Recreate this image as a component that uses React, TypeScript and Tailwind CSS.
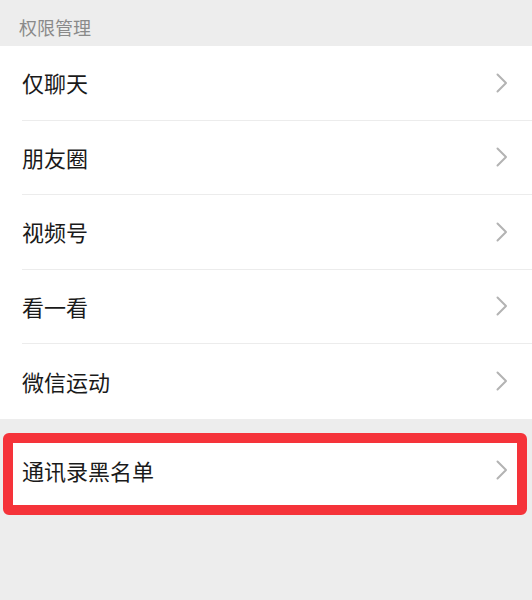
const font = { fontFamily: '"Noto Sans CJK SC", "Noto Sans", sans-serif' };

const Chevron = () => (
  <svg width="14" height="20" viewBox="0 0 14 20" fill="none" className="shrink-0">
    <path d="M2.5 1.5 L11 10 L2.5 18.5" stroke="#b3b3b3" strokeWidth="2" strokeLinecap="round" strokeLinejoin="round" />
  </svg>
);

const items = ['仅聊天', '朋友圈', '视频号', '看一看', '微信运动'];

export default function App() {
  return (
    <div className="w-[532px] h-[600px] bg-[#ededed] overflow-hidden" style={font}>
      <div className="h-[46px] flex items-start pt-[14px] pl-[19px] text-[18px] leading-[26px] text-[#8a8a8a]">权限管理</div>
      <div className="bg-white">
        {items.map((t, i) => (
          <div key={t} className="pl-[22px]">
            <div
              className={
                'h-[74.5px] flex items-center justify-between pr-[23px] ' +
                (i < items.length - 1 ? 'border-b border-[#ececec]' : '')
              }
            >
              <span className="text-[22px] text-[#1a1a1a]">{t}</span>
              <Chevron />
            </div>
          </div>
        ))}
      </div>
      <div className="mt-[14px] ml-[3px] mr-[5px] h-[82px] bg-white border-[10px] border-[#f5333a] rounded-[6px] flex items-center justify-between pl-[9px] pr-[8px] pb-[7px]">
        <span className="text-[22px] text-[#1a1a1a]">通讯录黑名单</span>
        <Chevron />
      </div>
    </div>
  );
}
